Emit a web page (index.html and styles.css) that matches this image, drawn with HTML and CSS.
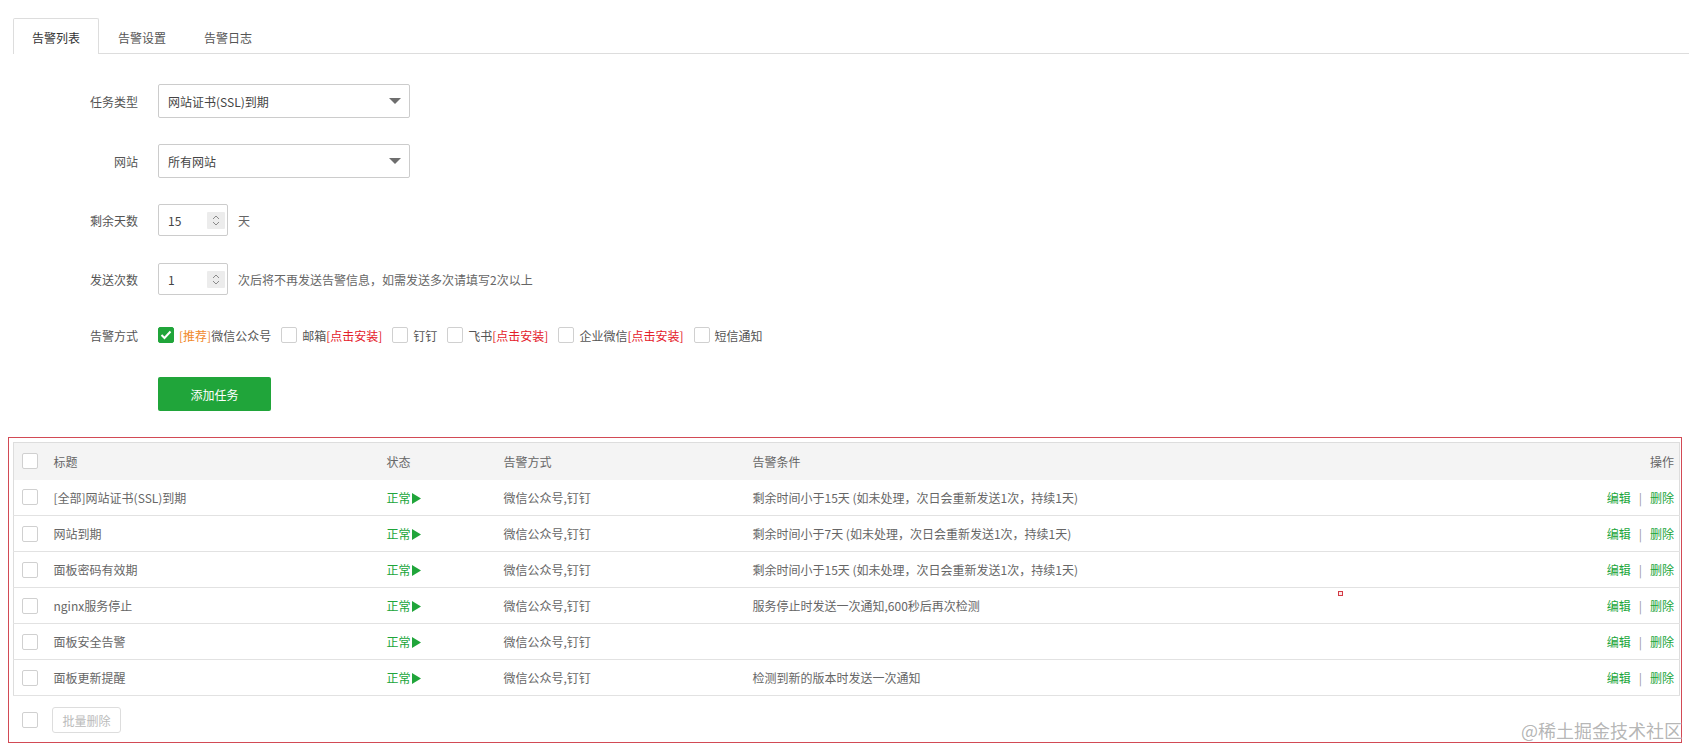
FILE: index.html
```html
<!DOCTYPE html>
<html lang="zh-CN">
<head>
<meta charset="utf-8">
<title>告警列表</title>
<link rel="stylesheet" href="styles.css">
</head>
<body>
<div class="tabs">
  <div class="tab active">告警列表</div>
  <div class="tab">告警设置</div>
  <div class="tab">告警日志</div>
</div>

<div class="form">
  <div class="row first">
    <label class="lbl">任务类型</label>
    <div class="select"><span>网站证书(SSL)到期</span><i class="caret"></i></div>
  </div>
  <div class="row">
    <label class="lbl">网站</label>
    <div class="select"><span>所有网站</span><i class="caret"></i></div>
  </div>
  <div class="row">
    <label class="lbl">剩余天数</label>
    <div class="num"><span>15</span>
      <svg class="spin" width="18" height="17" viewBox="0 0 18 17"><rect width="18" height="17" rx="1" fill="#ececec"/><polyline points="6,7 9,4 12,7" fill="none" stroke="#8a8a8a" stroke-width="1"/><polyline points="6,10 9,13 12,10" fill="none" stroke="#8a8a8a" stroke-width="1"/></svg>
    </div>
    <span class="after">天</span>
  </div>
  <div class="row r4">
    <label class="lbl">发送次数</label>
    <div class="num"><span>1</span>
      <svg class="spin" width="18" height="17" viewBox="0 0 18 17"><rect width="18" height="17" rx="1" fill="#ececec"/><polyline points="6,7 9,4 12,7" fill="none" stroke="#8a8a8a" stroke-width="1"/><polyline points="6,10 9,13 12,10" fill="none" stroke="#8a8a8a" stroke-width="1"/></svg>
    </div>
    <span class="after">次后将不再发送告警信息，如需发送多次请填写2次以上</span>
  </div>
  <div class="row r5">
    <label class="lbl">告警方式</label>
    <div class="checks">
      <span class="ck on"><svg width="12" height="10" viewBox="0 0 12 10"><polyline points="1.5,5 4.5,8 10.5,1.5" fill="none" stroke="#fff" stroke-width="2"/></svg></span><span class="opt"><b class="rec">[推荐]</b>微信公众号</span>
      <span class="ck"></span><span class="opt">邮箱<b class="ins">[点击安装]</b></span>
      <span class="ck"></span><span class="opt">钉钉</span>
      <span class="ck"></span><span class="opt">飞书<b class="ins">[点击安装]</b></span>
      <span class="ck"></span><span class="opt">企业微信<b class="ins">[点击安装]</b></span>
      <span class="ck"></span><span class="opt">短信通知</span>
    </div>
  </div>
  <div class="row btnrow">
    <button class="add">添加任务</button>
  </div>
</div>

<div class="box">
  <table class="grid">
    <colgroup>
      <col class="c-ck"><col class="c-title"><col class="c-state"><col class="c-way"><col class="c-cond"><col class="c-op">
    </colgroup>
    <thead>
      <tr><th><span class="ck"></span></th><th>标题</th><th>状态</th><th>告警方式</th><th>告警条件</th><th class="r">操作</th></tr>
    </thead>
    <tbody>
      <tr><td><span class="ck"></span></td><td>[全部]网站证书(SSL)到期</td><td class="ok">正常<svg class="play" width="9" height="11" viewBox="0 0 9 11"><polygon points="0,0 9,5.5 0,11" fill="#20a53a"/></svg></td><td>微信公众号,钉钉</td><td>剩余时间小于15天 (如未处理，次日会重新发送1次，持续1天)</td><td class="r"><a>编辑</a><i class="sep">|</i><a>删除</a></td></tr>
      <tr><td><span class="ck"></span></td><td>网站到期</td><td class="ok">正常<svg class="play" width="9" height="11" viewBox="0 0 9 11"><polygon points="0,0 9,5.5 0,11" fill="#20a53a"/></svg></td><td>微信公众号,钉钉</td><td>剩余时间小于7天 (如未处理，次日会重新发送1次，持续1天)</td><td class="r"><a>编辑</a><i class="sep">|</i><a>删除</a></td></tr>
      <tr><td><span class="ck"></span></td><td>面板密码有效期</td><td class="ok">正常<svg class="play" width="9" height="11" viewBox="0 0 9 11"><polygon points="0,0 9,5.5 0,11" fill="#20a53a"/></svg></td><td>微信公众号,钉钉</td><td>剩余时间小于15天 (如未处理，次日会重新发送1次，持续1天)</td><td class="r"><a>编辑</a><i class="sep">|</i><a>删除</a></td></tr>
      <tr><td><span class="ck"></span></td><td>nginx服务停止</td><td class="ok">正常<svg class="play" width="9" height="11" viewBox="0 0 9 11"><polygon points="0,0 9,5.5 0,11" fill="#20a53a"/></svg></td><td>微信公众号,钉钉</td><td>服务停止时发送一次通知,600秒后再次检测</td><td class="r"><a>编辑</a><i class="sep">|</i><a>删除</a></td></tr>
      <tr><td><span class="ck"></span></td><td>面板安全告警</td><td class="ok">正常<svg class="play" width="9" height="11" viewBox="0 0 9 11"><polygon points="0,0 9,5.5 0,11" fill="#20a53a"/></svg></td><td>微信公众号,钉钉</td><td></td><td class="r"><a>编辑</a><i class="sep">|</i><a>删除</a></td></tr>
      <tr><td><span class="ck"></span></td><td>面板更新提醒</td><td class="ok">正常<svg class="play" width="9" height="11" viewBox="0 0 9 11"><polygon points="0,0 9,5.5 0,11" fill="#20a53a"/></svg></td><td>微信公众号,钉钉</td><td>检测到新的版本时发送一次通知</td><td class="r"><a>编辑</a><i class="sep">|</i><a>删除</a></td></tr>
    </tbody>
  </table>
  <div class="foot">
    <span class="ck"></span>
    <button class="batch">批量删除</button>
  </div>
</div>

<i class="mark"></i>
<div class="watermark">@稀土掘金技术社区</div>
</body>
</html>
```

FILE: styles.css
```css
* { box-sizing: border-box; }
html, body { margin: 0; padding: 0; }
body {
  width: 1689px;
  height: 748px;
  overflow: hidden;
  position: relative;
  background: #fff;
  color: #555;
  font-family: "Noto Sans CJK SC", "Noto Sans", "Liberation Sans", sans-serif;
  font-size: 12px;
}

/* tabs */
.tabs {
  display: flex;
  margin: 18px 0 0 13px;
  height: 36px;
  border-bottom: 1px solid #ddd;
}
.tab {
  height: 36px;
  padding: 4px 18px 0;
  line-height: 30px;
  border: 1px solid transparent;
  border-bottom: 0;
  color: #555;
  margin-bottom: -1px;
}
.tab.active {
  border-color: #ddd;
  border-radius: 2px 2px 0 0;
  background: #fff;
  color: #333;
}

/* form */
.form { padding: 30px 0 0 38px; }
.row {
  display: flex;
  align-items: center;
  height: 34px;
  margin-bottom: 25px;
}
.row.first { margin-bottom: 26px; }
.row.r4 { margin-bottom: 22px; }
.row.r5 { margin-bottom: 25px; }
.row.btnrow { padding-left: 120px; margin-bottom: 26px; }
.lbl {
  width: 100px;
  margin-right: 20px;
  text-align: right;
  color: #555;
}
.select {
  width: 252px;
  height: 34px;
  border: 1px solid #ccc;
  border-radius: 2px;
  padding: 0 8px 0 9px;
  display: flex;
  align-items: center;
  justify-content: space-between;
  color: #444;
}
.caret {
  width: 0;
  height: 0;
  border-left: 6px solid transparent;
  border-right: 6px solid transparent;
  border-top: 6px solid #6e6e6e;
}
.num {
  width: 70px;
  height: 32px;
  border: 1px solid #ccc;
  border-radius: 2px;
  padding: 0 2px 0 9px;
  display: flex;
  align-items: center;
  justify-content: space-between;
  color: #444;
}
.spin { display: block; }
.after { margin-left: 10px; color: #666; }

.checks { display: flex; align-items: center; }
.ck {
  display: inline-flex;
  align-items: center;
  justify-content: center;
  width: 16px;
  height: 16px;
  border: 1px solid #d0d0d0;
  border-radius: 2px;
  background: #fff;
  vertical-align: middle;
  flex: none;
}
.ck.on { background: #20a53a; border-color: #20a53a; }
.opt { margin: 0 10px 0 5px; color: #555; }
.opt b { font-weight: normal; }
.rec { color: #f0892c; }
.ins { color: #e4202a; }

.add {
  width: 113px;
  height: 34px;
  border: 0;
  border-radius: 2px;
  background: #20a53a;
  color: #fff;
  font-family: inherit;
  font-size: 12px;
  padding: 0;
}

/* list box */
.box {
  margin: 0 7px 0 8px;
  border: 1px solid #d24a55;
  padding: 4px 1px 0 4px;
}
.grid {
  width: 100%;
  border-collapse: collapse;
  table-layout: fixed;
  border: 1px solid #ddd;
}
.c-ck { width: 31px; }
.c-title { width: 333px; }
.c-state { width: 117px; }
.c-way { width: 249px; }
.c-op { width: 160px; }
.grid th {
  height: 37px;
  background: #f4f4f4;
  font-weight: normal;
  text-align: left;
  color: #666;
  padding: 0 9px;
}
.grid td {
  height: 36px;
  border-bottom: 1px solid #e2e2e2;
  padding: 0 9px;
  color: #666;
  white-space: nowrap;
}
.grid th:first-child, .grid td:first-child { padding: 0 0 0 8px; }
.grid .ck { display: flex; }
.grid .r { text-align: right; padding-right: 5px; }
.ok { color: #20a53a !important; }
.play { vertical-align: -1px; margin-left: 1px; }
.grid a { color: #20a53a; }
.sep { font-style: normal; color: #999; margin: 0 8px; }

.foot {
  display: flex;
  align-items: center;
  padding: 11px 0 9px 9px;
}
.batch {
  margin-left: 14px;
  width: 69px;
  height: 26px;
  border: 1px solid #ddd;
  border-radius: 3px;
  background: #fff;
  color: #bbb;
  font-family: inherit;
  font-size: 12px;
  padding: 0;
}

.mark {
  position: absolute;
  left: 1338px;
  top: 591px;
  width: 5px;
  height: 5px;
  border: 1px solid #d33a45;
  background: #fbeaea;
}
.watermark {
  position: absolute;
  right: 7px;
  top: 718px;
  font-size: 18px;
  line-height: 24px;
  color: rgba(140, 140, 140, 0.65);
  text-shadow: 0 0 2px #fff, 0 0 1px #fff;
}
```
